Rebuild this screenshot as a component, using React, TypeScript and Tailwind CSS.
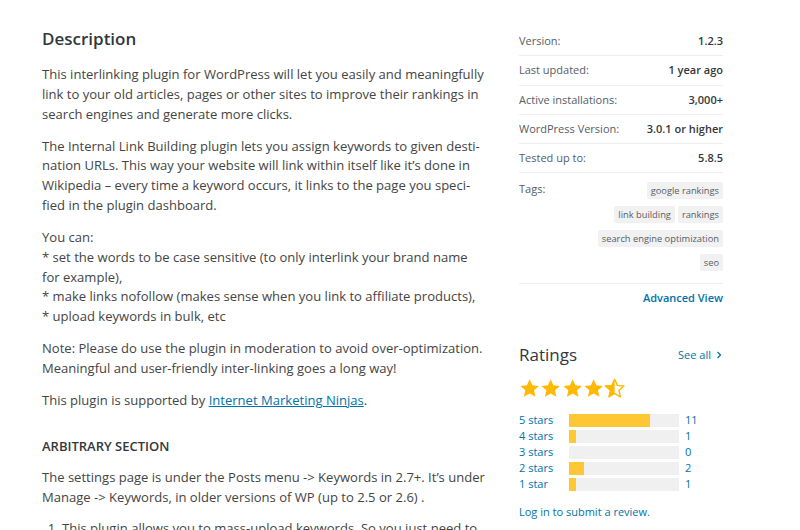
import React from "react";

const Star = ({ fill }: { fill: "full" | "half" }) => (
  <svg width="21.3" height="21" viewBox="0 0 24 24" className="block">
    <defs>
      <clipPath id="halfclip">
        <rect x="0" y="0" width="12" height="24" />
      </clipPath>
    </defs>
    {fill === "full" ? (
      <polygon
        points="12,1.5 15.1,8.4 22.6,9.1 16.9,14.1 18.6,21.5 12,17.6 5.4,21.5 7.1,14.1 1.4,9.1 8.9,8.4"
        fill="#ffb900"
      />
    ) : (
      <>
        <polygon
          points="12,1.5 15.1,8.4 22.6,9.1 16.9,14.1 18.6,21.5 12,17.6 5.4,21.5 7.1,14.1 1.4,9.1 8.9,8.4"
          fill="none"
          stroke="#ffb900"
          strokeWidth="1.6"
          strokeLinejoin="round"
        />
        <polygon
          points="12,1.5 15.1,8.4 22.6,9.1 16.9,14.1 18.6,21.5 12,17.6 5.4,21.5 7.1,14.1 1.4,9.1 8.9,8.4"
          fill="#ffb900"
          clipPath="url(#halfclip)"
        />
      </>
    )}
  </svg>
);

const Tag = ({ children }: { children: React.ReactNode }) => (
  <span className="inline-block bg-[#f1f1f1] text-[#555d66] text-[9.3px] leading-[17px] h-[17px] px-[4px] rounded-[2px]">
    {children}
  </span>
);

const MetaRow = ({ label, value }: { label: string; value: string }) => (
  <div className="flex justify-between items-center border-b border-[#eeeeee] py-[6px] leading-[16.3px]">
    <span className="text-[#555d66]">{label}</span>
    <span className="font-semibold text-[#32373c]">{value}</span>
  </div>
);

const ratings = [
  { label: "5 stars", count: 11 },
  { label: "4 stars", count: 1 },
  { label: "3 stars", count: 0 },
  { label: "2 stars", count: 2 },
  { label: "1 star", count: 1 },
];

export default function App() {
  const total = 15;
  return (
    <div
      className="w-[800px] h-[530px] overflow-hidden bg-white flex pl-[42px] gap-[33px]"
      style={{ fontFamily: '"Open Sans", "Noto Sans", sans-serif' }}
    >
      <main className="w-[444px] shrink-0 pt-[27px] text-[13.06px] leading-[19.85px] text-[#444]">
        <h2 className="text-[17px] leading-[24px] font-semibold text-[#32373c] mb-[14px]">
          Description
        </h2>
        <p className="mb-[12px]">
          This interlinking plugin for WordPress will let you easily and meaningfully link to your old
          articles, pages or other sites to improve their rankings in search engines and generate more
          clicks.
        </p>
        <p className="mb-[12px]">
          The Internal Link Building plugin lets you assign keywords to given desti-
          <br />
          nation URLs. This way your website will link within itself like it’s done in Wikipedia – every
          time a keyword occurs, it links to the page you speci-
          <br />
          fied in the plugin dashboard.
        </p>
        <p className="mb-[12px]">
          You can:
          <br />* set the words to be case sensitive (to only interlink your brand name
          <br />
          for example),
          <br />* make links nofollow (makes sense when you link to affiliate products),
          <br />* upload keywords in bulk, etc
        </p>
        <p className="mb-[12px]">
          Note: Please do use the plugin in moderation to avoid over-optimization. Meaningful and
          user-friendly inter-linking goes a long way!
        </p>
        <p className="mb-[12px]">
          This plugin is supported by{" "}
          <a href="#" className="text-[#0073aa] underline">
            Internet Marketing Ninjas
          </a>
          .
        </p>
        <h3 className="mt-[25px] mb-[12px] text-[13px] leading-[20px] font-semibold uppercase text-[#32373c]">
          Arbitrary section
        </h3>
        <p className="mb-[12px]">
          The settings page is under the Posts menu -&gt; Keywords in 2.7+. It’s under Manage -&gt;
          Keywords, in older versions of WP (up to 2.5 or 2.6) .
        </p>
        <ol className="list-decimal pl-[20px]">
          <li>This plugin allows you to mass-upload keywords. So you just need to</li>
        </ol>
      </main>

      <aside className="w-[204px] shrink-0 pt-[27px] text-[11px]">
        <MetaRow label="Version:" value="1.2.3" />
        <MetaRow label="Last updated:" value="1 year ago" />
        <MetaRow label="Active installations:" value="3,000+" />
        <MetaRow label="WordPress Version:" value="3.0.1 or higher" />
        <MetaRow label="Tested up to:" value="5.8.5" />
        <div className="flex justify-between border-b border-[#eeeeee] pt-[9px] pb-[12px]">
          <span className="text-[#555d66] leading-[14px]">Tags:</span>
          <div className="flex flex-col items-end gap-[7px]">
            <div className="flex gap-[3px]">
              <Tag>google rankings</Tag>
            </div>
            <div className="flex gap-[3px]">
              <Tag>link building</Tag>
              <Tag>rankings</Tag>
            </div>
            <div className="flex gap-[3px]">
              <Tag>search engine optimization</Tag>
            </div>
            <div className="flex gap-[3px]">
              <Tag>seo</Tag>
            </div>
          </div>
        </div>
        <div className="flex justify-end pt-[6px]">
          <a href="#" className="text-[#0073aa] font-semibold leading-[16px]">
            Advanced View
          </a>
        </div>

        <div className="mt-[37px] flex justify-between items-center">
          <h3 className="text-[17px] leading-[24px] text-[#32373c]">Ratings</h3>
          <a href="#" className="text-[#0073aa] flex items-center gap-[4px]">
            See all
            <svg width="8" height="8" viewBox="0 0 8 8">
              <path d="M2.5 1 L5.5 4 L2.5 7" fill="none" stroke="#0073aa" strokeWidth="1.3" />
            </svg>
          </a>
        </div>
        <div className="mt-[11px] flex">
          <Star fill="full" />
          <Star fill="full" />
          <Star fill="full" />
          <Star fill="full" />
          <Star fill="half" />
        </div>
        <div className="mt-[13px] flex flex-col">
          {ratings.map((r) => (
            <div key={r.label} className="flex items-center h-[16px] leading-[16px]">
              <a href="#" className="w-[50px] text-[#0073aa]">
                {r.label}
              </a>
              <div className="w-[110px] h-[13px] bg-[#f0f0f0]">
                <div
                  className="h-full bg-[#ffc733]"
                  style={{ width: `${(r.count / total) * 100}%` }}
                />
              </div>
              <span className="ml-[6px] text-[#0073aa]">{r.count}</span>
            </div>
          ))}
        </div>
        <div className="mt-[12px] leading-[16px]">
          <a href="#" className="text-[#0073aa]">
            Log in to submit a review.
          </a>
        </div>
      </aside>
    </div>
  );
}
